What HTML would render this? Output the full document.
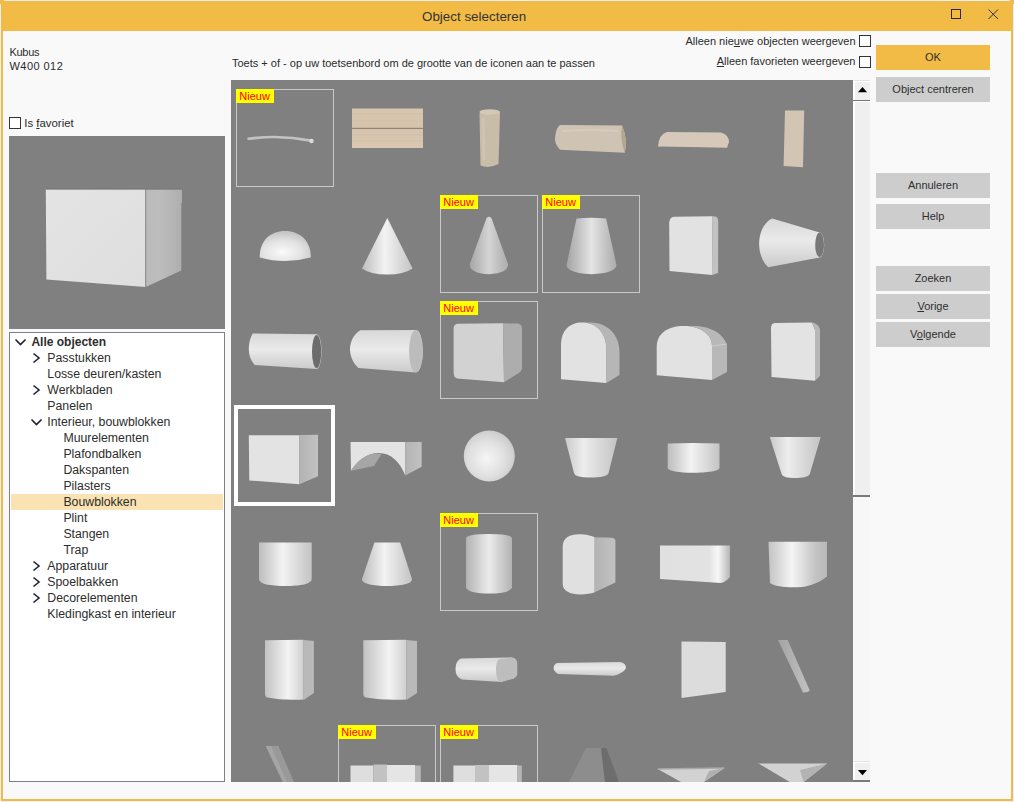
<!DOCTYPE html>
<html><head><meta charset="utf-8">
<style>
html,body{margin:0;padding:0}
body{width:1014px;height:802px;position:relative;overflow:hidden;background:#eef0f6;font-family:"Liberation Sans",sans-serif;color:#2b2b2b}
.a{position:absolute}
.t{position:absolute;line-height:1;white-space:nowrap}
#frame{left:1px;top:1px;width:1012px;height:800px;background:#f2bb46}
#content{left:3px;top:31px;width:1008px;height:768px;background:#f9f9f9}
.btn{position:absolute;left:876px;width:114px;height:25px;background:#cdcdcd}
.btn span{position:absolute;left:0;right:0;text-align:center;line-height:1;font-size:11px;color:#2f2f2f}
.cb{position:absolute;width:10px;height:10px;border:1px solid #333;background:#fff}
.tree{font-size:12px;color:#2d2d2d}
.u{text-decoration:underline}
#grid{left:231px;top:80px;width:622px;height:702px;background:#808080;overflow:hidden}
.cell{position:absolute;width:96px;height:96px;border:1px solid #c9c9c9}
.nw{position:absolute;left:-1px;top:-1px;width:38px;height:14px;background:#ffff00}
.nw span{position:absolute;left:3.3px;top:1.8px;font-size:11px;line-height:1;color:#ff0000}
#sb{left:853px;top:80px;width:17px;height:702px;background:#f7f7f7}
</style></head><body>
<div id="frame" class="a"></div>
<div class="a" style="left:0;top:0;width:4px;height:4px;background:#f2bb46"></div>
<div class="a" style="left:1010px;top:0;width:4px;height:4px;background:#f2bb46"></div>
<div id="content" class="a"></div>
<div class="t m" style="left:422px;top:10.3px;font-size:13.4px;color:#333">Object selecteren</div>
<!-- title icons -->
<svg class="a" style="left:0;top:0" width="1014" height="31">
  <rect x="951.5" y="9.5" width="9" height="9" fill="none" stroke="#2b2b35" stroke-width="1"/>
  <path d="M988.5,9.5 L998,19 M998,9.5 L988.5,19" stroke="#2b2b35" stroke-width="1"/>
</svg>

<div class="t m" style="left:9.5px;top:46.7px;font-size:11px;letter-spacing:-0.3px">Kubus</div>
<div class="t m" style="left:9.5px;top:61.2px;font-size:11px;letter-spacing:0.45px">W400 012</div>
<div class="t m" style="left:232px;top:58.1px;font-size:11px">Toets + of - op uw toetsenbord om de grootte van de iconen aan te passen</div>
<div class="t m" style="right:158.5px;top:36.1px;font-size:11px">Alleen nie<span class="u">u</span>we objecten weergeven</div>
<div class="cb" style="left:859px;top:35px"></div>
<div class="t m" style="right:158.5px;top:56.2px;font-size:11px"><span class="u">A</span>lleen favorieten weergeven</div>
<div class="cb" style="left:859px;top:56px"></div>

<div class="btn" style="top:45px;background:#f2bb46"><span class="m" style="top:51.7px;top:6.7px">OK</span></div>
<div class="btn" style="top:77px"><span style="top:6.7px">Object centreren</span></div>
<div class="btn" style="top:173px"><span style="top:6.7px">Annuleren</span></div>
<div class="btn" style="top:204px"><span style="top:6.7px">Help</span></div>
<div class="btn" style="top:266px"><span style="top:6.7px">Zoeken</span></div>
<div class="btn" style="top:294px"><span style="top:6.7px"><span class="u" style="position:static">V</span>orige</span></div>
<div class="btn" style="top:322px"><span style="top:6.7px">V<span class="u" style="position:static">o</span>lgende</span></div>

<div class="cb" style="left:9px;top:117px"></div>
<div class="t m" style="left:24.3px;top:117.8px;font-size:11.4px">Is <span class="u">f</span>avoriet</div>

<!-- preview -->
<div class="a" style="left:9px;top:136px;width:216px;height:193px;background:#808080"></div>
<svg class="a" style="left:0;top:0" width="230" height="330">
 <defs><linearGradient id="pvs" x1="0" x2="1"><stop offset="0" stop-color="#b3b3b3"/><stop offset="1" stop-color="#c2c2c2"/></linearGradient>
 <linearGradient id="pvf" x1="0" x2="1" y1="0" y2="1"><stop offset="0" stop-color="#e4e4e4"/><stop offset="1" stop-color="#dedede"/></linearGradient></defs>
 <path d="M45.8,189.2 L145.7,189.2 L145.7,287 L46.4,279.5 Z" fill="url(#pvf)"/>
 <linearGradient id="pvs2" x1="0" x2="1"><stop offset="0" stop-color="#bababa"/><stop offset="0.4" stop-color="#bdbdbd"/><stop offset="1" stop-color="#aeaeae"/></linearGradient><path d="M145.7,189.2 L182,189.2 L182,203 L181.3,203 L181.3,270.5 L145.7,287 Z" fill="url(#pvs2)"/><path d="M45.8,189.2 L182,189.2" stroke="#6e6e6e" stroke-width="0.7"/>
 <path d="M145.7,189.2 L145.7,287" stroke="#7a7a7a" stroke-width="0.8"/>
</svg>

<!-- tree -->
<div class="a" style="left:9px;top:332px;width:214px;height:448px;border:1px solid #7c7f88;background:#fff"></div>
<div class="a" style="left:11px;top:494px;width:212px;height:16px;background:#fae2b2"></div>
<div class="tree">
<div class="t m" style="left:31.4px;top:335.8px;font-weight:bold">Alle objecten</div>
<div class="t m" style="left:47.3px;top:351.55px;font-size:12.3px">Passtukken</div>
<div class="t m" style="left:47.3px;top:367.55px;font-size:12.3px">Losse deuren/kasten</div>
<div class="t m" style="left:47.3px;top:383.55px;font-size:12.3px">Werkbladen</div>
<div class="t m" style="left:47.3px;top:399.55px;font-size:12.3px">Panelen</div>
<div class="t m" style="left:47.3px;top:415.55px;font-size:12.3px">Interieur, bouwblokken</div>
<div class="t m" style="left:63.4px;top:431.55px;font-size:12.3px">Muurelementen</div>
<div class="t m" style="left:63.4px;top:447.55px;font-size:12.3px">Plafondbalken</div>
<div class="t m" style="left:63.4px;top:463.55px;font-size:12.3px">Dakspanten</div>
<div class="t m" style="left:63.4px;top:479.55px;font-size:12.3px">Pilasters</div>
<div class="t m" style="left:63.4px;top:495.55px;font-size:12.3px">Bouwblokken</div>
<div class="t m" style="left:63.4px;top:511.55px;font-size:12.3px">Plint</div>
<div class="t m" style="left:63.4px;top:527.55px;font-size:12.3px">Stangen</div>
<div class="t m" style="left:63.4px;top:543.55px;font-size:12.3px">Trap</div>
<div class="t m" style="left:47.3px;top:559.55px;font-size:12.3px">Apparatuur</div>
<div class="t m" style="left:47.3px;top:575.55px;font-size:12.3px">Spoelbakken</div>
<div class="t m" style="left:47.3px;top:591.55px;font-size:12.3px">Decorelementen</div>
<div class="t m" style="left:47.3px;top:607.55px;font-size:12.3px">Kledingkast en interieur</div>
</div>
<svg class="a" style="left:0;top:330px" width="60" height="300" fill="none" stroke="#1f2330" stroke-width="1.6">
  <path d="M15.5,9.5 L20.5,14.5 L25.5,9.5"/>
  <path d="M33.5,23.5 L39,28 L33.5,32.5"/>
  <path d="M33.5,55.5 L39,60 L33.5,64.5"/>
  <path d="M31.5,89.5 L36.5,94.5 L41.5,89.5"/>
  <path d="M33.5,231.5 L39,236 L33.5,240.5"/>
  <path d="M33.5,247.5 L39,252 L33.5,256.5"/>
  <path d="M33.5,263.5 L39,268 L33.5,272.5"/>
</svg>

<!-- grid -->
<div id="grid" class="a"><div class="a" style="left:-231px;top:-80px;width:1014px;height:802px">
<div class="cell" style="left:236px;top:89px"><div class="nw"><span>Nieuw</span></div></div>
<div class="cell" style="left:440px;top:195px"><div class="nw"><span>Nieuw</span></div></div>
<div class="cell" style="left:542px;top:195px"><div class="nw"><span>Nieuw</span></div></div>
<div class="cell" style="left:440px;top:301px"><div class="nw"><span>Nieuw</span></div></div>
<div class="cell" style="left:440px;top:513px"><div class="nw"><span>Nieuw</span></div></div>
<div class="cell" style="left:338px;top:725px"><div class="nw"><span>Nieuw</span></div></div>
<div class="cell" style="left:440px;top:725px"><div class="nw"><span>Nieuw</span></div></div>
<div class="a" style="left:234px;top:405px;width:93px;height:93px;border:4px solid #fff"></div>
<svg class="a" style="left:0;top:0" width="1014" height="802">
<defs>
 <linearGradient id="cylH" x1="0" x2="1" y1="0" y2="0">
  <stop offset="0" stop-color="#bdbdbd"/><stop offset="0.45" stop-color="#f3f3f3"/><stop offset="1" stop-color="#c4c4c4"/>
 </linearGradient>
 <linearGradient id="cylH2" x1="0" x2="1" y1="0" y2="0">
  <stop offset="0" stop-color="#b3b3b3"/><stop offset="0.5" stop-color="#ebebeb"/><stop offset="1" stop-color="#b3b3b3"/>
 </linearGradient>
 <linearGradient id="cylV" x1="0" x2="0" y1="0" y2="1">
  <stop offset="0" stop-color="#d8d8d8"/><stop offset="0.45" stop-color="#eaeaea"/><stop offset="1" stop-color="#cbcbcb"/>
 </linearGradient>
 <radialGradient id="sph" cx="0.45" cy="0.55" r="0.6">
  <stop offset="0" stop-color="#f6f6f6"/><stop offset="0.6" stop-color="#dfdfdf"/><stop offset="1" stop-color="#c8c8c8"/>
 </radialGradient>
 <radialGradient id="dome" cx="0.45" cy="0.7" r="0.65">
  <stop offset="0" stop-color="#fafafa"/><stop offset="0.6" stop-color="#e2e2e2"/><stop offset="1" stop-color="#c6c6c6"/>
 </radialGradient>
 <linearGradient id="wood" x1="0" x2="0" y1="0" y2="1">
  <stop offset="0" stop-color="#d9c6ae"/><stop offset="0.5" stop-color="#d6c3ab"/><stop offset="1" stop-color="#dac8b0"/>
 </linearGradient>
 <linearGradient id="rod" x1="0" x2="1" y1="0" y2="0">
  <stop offset="0" stop-color="#a3a3a3"/><stop offset="1" stop-color="#c2c2c2"/>
 </linearGradient>
</defs>
<!-- row1 -->
<path d="M248.5,138.8 Q280,134.5 311,140.6" fill="none" stroke="#c3c3c3" stroke-width="2.6" stroke-linecap="round"/>
<circle cx="311.5" cy="141" r="2.2" fill="#dadada"/>
<rect x="352" y="108.5" width="71" height="39.5" fill="url(#wood)"/>
<rect x="352" y="127.8" width="71" height="1.2" fill="#8f8476"/>
<path d="M352,114 H423 M352,121 H423 M352,135 H423 M352,141 H423" stroke="#cdb9a2" stroke-width="1.2" opacity="0.5"/>
<path d="M479.5,113 Q489.5,108.5 500,112 L498.5,164 Q489,169 480.5,165.5 Z" fill="#c8bda8"/><ellipse cx="489.7" cy="112" rx="10.3" ry="2.8" fill="#d3c9b7"/><path d="M483,118 L484,160" stroke="#d2c8b6" stroke-width="3" opacity="0.7"/>
<path d="M560,125 L622,125.5 Q628,139 624.8,152.7 L560,149.7 Q553.5,143 555.3,136 Q556,128 560,125 Z" fill="#cfc4b4"/><path d="M562,131 Q592,129 618,131" stroke="#d9d0c2" stroke-width="2" fill="none" opacity="0.7"/>
<path d="M622,125.5 Q628,139 624.8,152.7 Q619.5,139 622,125.5 Z" fill="#b3a692"/>
<path d="M658,146.5 Q659,134 667,132 L721,132.5 Q729,135 729,142 L727,147.7 L690,147 Z" fill="#d6c9ba"/>
<path d="M785,110.5 L804.2,110.5 L803,167.2 L783.6,166 Z" fill="#d3c5b4"/>
<!-- row2 -->
<path d="M259.7,257.5 C259.5,241 270,231.1 285,231.1 C300,231.1 311,241 310.8,257.5 Q298,261 285,261 Q272,261 259.7,257.5 Z" fill="url(#dome)"/>
<path d="M387.3,218 L412.6,268.5 Q404,274.5 387.3,274.5 Q370,274.5 362,268.5 Z" fill="url(#cylH)"/>
<linearGradient id="rc" x1="0" x2="1"><stop offset="0" stop-color="#a6a6a6"/><stop offset="0.5" stop-color="#d4d4d4"/><stop offset="1" stop-color="#acacac"/></linearGradient><path d="M485.5,221 Q486.5,216.8 489,216.8 Q491.5,216.8 492.5,221 L508,264 Q509,273 489,274.3 Q469,273 469.8,264 Z" fill="url(#rc)"/>
<linearGradient id="tc" x1="0" x2="1"><stop offset="0" stop-color="#a4a4a4"/><stop offset="0.5" stop-color="#e4e4e4"/><stop offset="1" stop-color="#ababab"/></linearGradient><path d="M576.5,218.5 Q591,217 606.1,218.5 L616.3,264 Q618,273 591.3,274.3 Q565,273 566.8,264 Z" fill="url(#tc)"/>
<path d="M674,216.8 L712.6,216.3 L712,274.9 L669.5,270.9 L669.2,223 Q669.5,217 674,216.8 Z" fill="#e2e2e2"/>
<path d="M712.6,216.3 L716.5,216.8 Q718.2,218 718.2,221 L718.1,272.9 L712,274.9 Z" fill="#c2c2c2"/>
<path d="M772.2,218.4 L819.6,232.4 A4.6,12.5 0 0 1 819.6,257.4 L768.4,267.3 C762,262 759,252 759.1,243 C759.5,232 764,222 772.2,218.4 Z" fill="url(#cylV)"/>
<ellipse cx="819.6" cy="244.9" rx="4.4" ry="12.3" fill="#787878"/>
<!-- row3 -->
<path d="M252.8,333.5 L316.9,334.3 A5,17.4 0 0 1 316.9,369 L254.7,365.1 C250.5,360 248.8,355 248.8,349.3 C248.8,343 250.5,337 252.8,333.5 Z" fill="url(#cylV)"/>
<ellipse cx="316.6" cy="351.6" rx="4.6" ry="16.6" fill="#6c6c6c"/>
<path d="M360.3,330.2 L415.9,330 A6.9,21.3 0 0 1 415.9,372.6 L358.3,368.1 C353,363 350,356 350,349.3 C350,341 354,334 360.3,330.2 Z" fill="url(#cylV)"/>
<ellipse cx="415.9" cy="351.3" rx="6.9" ry="21.3" fill="#bcbcbc"/>
<path d="M458,323.8 L503,323.3 L504,382.3 L457,378.5 Q453.6,377 453.6,372 L453.6,328 Q454,324 458,323.8 Z" fill="#d2d2d2"/>
<path d="M503,323.3 L518,323.6 Q522,324.5 522,329 L522,369 Q521,372 518,373.5 L504,382.3 Z" fill="#adadad"/>
<path d="M561,379.2 L561,345 C561,330 570,322.4 582,322.4 C596,322.4 606.4,332 606.4,350 L606.4,383 Z" fill="#e2e2e2"/>
<path d="M582,322.4 L590,322.4 C608,322.4 619.5,335 619.5,352 L619.5,375 L606.4,383 L606.4,350 C606.4,332 596,322.4 582,322.4 Z" fill="#b6b6b6"/>
<path d="M656.7,375.2 L656.7,347 C656.7,334 667,326 684,326 C700,326 712,334 712,346 L712,380 Z" fill="#e2e2e2"/>
<path d="M684,326 L694,326 C712,326 724,335 727,345 L727,372 L712,380 L712,346 C712,334 700,326 684,326 Z" fill="#b8b8b8"/>
<path d="M712,346 L727,344" stroke="#d0d0d0" stroke-width="0.8"/>
<path d="M775,323 L812,322.4 L815,330 L815,380.8 L771.5,377 L771,328 Q771,323.2 775,323 Z" fill="#e3e3e3"/>
<path d="M812,322.4 Q818,323 820,329 L820,376 L815,380.8 L815,330 Z" fill="#b7b7b7"/>
<!-- row4 -->
<path d="M248.8,435.2 L299.3,435.2 L299.3,484.3 L249.3,480.5 Z" fill="#e3e3e3"/>
<path d="M299.3,435 L318,434.8 L318,476.3 L299.3,484.3 Z" fill="url(#pvs)"/>
<path d="M350.5,442 L405.3,442 L405.3,475.5 C400,462 391,453 379,453 C367,453 357,461 351,470.8 Z" fill="#e3e3e3"/>
<path d="M351,470.8 C356,462 365,455 373,453.4 L381.5,454 L374,466 Z" fill="#a6a6a6"/>
<path d="M405.3,442 L421.6,442 L421.6,466.8 L405.3,475.5 Z" fill="url(#pvs)"/>
<circle cx="489.3" cy="456" r="25.5" fill="url(#sph)"/>
<linearGradient id="cylH3" x1="0" x2="1"><stop offset="0" stop-color="#cacaca"/><stop offset="0.35" stop-color="#ededed"/><stop offset="1" stop-color="#c4c4c4"/></linearGradient><path d="M565,437.9 L617.3,437.9 L608.6,473 C607,476.5 600,477.5 590.8,477.5 C581,477.5 575,476.5 574,473 Z" fill="url(#cylH3)"/>
<path d="M667.7,443.5 Q693.5,442.5 719.5,443.5 L719.5,468 C719.5,471 707,472.8 693,472.8 C679,472.8 667.7,471 667.7,468 Z" fill="url(#cylH)"/>
<path d="M769.8,437 L820.7,437 L809.8,474 C808.5,477 802,478 795,478 C788,478 782.5,477 781.6,474 Z" fill="url(#cylH3)"/>
<!-- row5 -->
<path d="M259,542.5 L311.7,542.5 L311.7,579 C311.7,584 300,586 285.3,586 C270,586 259,584 259,579 Z" fill="url(#cylH)"/>
<path d="M374.4,542.6 L400.2,542.6 L411.8,578.5 C413.5,584 400,586 387,586 C374,586 360.5,584 362.2,578.5 Z" fill="url(#cylH)"/>
<path d="M466,538 Q468,534 489,534 Q510,534 512,538 L512,588 Q508,593.6 489,593.6 Q470,593.6 466,588 Z" fill="url(#cylH2)"/>
<path d="M562.7,546 C562.7,538 570,534.3 579,534.3 C586,534.3 592,536 594.7,537.3 L594.7,592.3 C591,593.8 586,594.4 580.5,594.4 C570,594.4 562.7,591 562.7,584 Z" fill="#e0e0e0"/>
<path d="M594.7,537.3 L612,537.8 Q615.4,538.5 615.4,541 L615.4,582.5 L594.7,592.3 Z" fill="url(#pvs)"/>
<linearGradient id="rr" x1="0" x2="1"><stop offset="0" stop-color="#e0e0e0"/><stop offset="0.7" stop-color="#e3e3e3"/><stop offset="0.83" stop-color="#f7f7f7"/><stop offset="1" stop-color="#b5b5b5"/></linearGradient>
<path d="M660,545.4 L730,545.4 L730,577 Q726,582 721,583 L660,579 Z" fill="url(#rr)"/>
<linearGradient id="hc" x1="0" x2="1"><stop offset="0" stop-color="#c3c3c3"/><stop offset="0.4" stop-color="#f5f5f5"/><stop offset="0.8" stop-color="#c4c4c4"/><stop offset="1" stop-color="#b8b8b8"/></linearGradient>
<path d="M768.5,541.7 L827,541.7 L827,576.6 C820,582 812,586 802,587 C790,588 775,587 770,583 Z" fill="url(#hc)"/>
<!-- row6 -->
<linearGradient id="c6" x1="0" x2="1"><stop offset="0" stop-color="#c2c2c2"/><stop offset="0.6" stop-color="#f4f4f4"/><stop offset="1" stop-color="#cfcfcf"/></linearGradient>
<path d="M265,640.2 L303.6,639.8 L303.6,699.6 C292,700.2 275,699.5 266.5,697.3 Q265,696.5 265,694 Z" fill="url(#c6)"/>
<path d="M303.6,640 L313.9,641 L313.9,693 L303.6,700 Z" fill="#b9b9b9"/>
<path d="M363.3,640.2 L406.4,639.8 L406.4,699.6 C394,700.2 375,699.5 365,697.3 Q363.3,696.5 363.3,694 Z" fill="url(#c6)"/>
<path d="M406.4,640 L417,641 L417,693 L406.4,700 Z" fill="#b9b9b9"/>
<path d="M461,658.5 L512,657.5 L502,682 L462,679.5 Q455.5,677 455.5,669 Q455.5,660.5 461,658.5 Z" fill="url(#cylV)"/>
<path d="M499.5,659 L512,657.5 Q517.3,658 517.3,664 L517.3,674 Q517,677.5 512,679 L502,682 Q496,682 496,670 Q496,660 499.5,659 Z" fill="#bdbdbd"/>
<path d="M557,663 L620,662 Q626,663 626,668 Q624,673 614,675.7 L558,674 Q553.6,671 553.6,668 Q554,664 557,663 Z" fill="url(#cylV)"/>
<path d="M681.5,641.5 L725.7,642 L725.7,692 L681.5,698 Z" fill="#dcdcdc"/>
<path d="M778,640 L787.6,640 L809.7,690.5 Q808,693 803,692.5 Z" fill="url(#rod)"/>
<!-- row7 -->
<path d="M265.7,746 L278.1,746 L293.7,782 L282.8,782 Z" fill="#a5a5a5"/>
<path d="M271,746 L278.1,746 L293.7,782 L287,782 Z" fill="#999999"/>
<rect x="350.5" y="765.5" width="23" height="17" fill="#dedede"/><rect x="373.5" y="764.5" width="13.5" height="18" fill="#c2c2c2"/>
<rect x="387" y="765" width="28" height="17" fill="#e5e5e5"/><rect x="415" y="765.5" width="5.8" height="17" fill="#b6b6b6"/>
<rect x="453.4" y="765.5" width="21.6" height="17" fill="#dedede"/><rect x="475" y="765" width="14" height="17.5" fill="#c2c2c2"/>
<rect x="489" y="765" width="28.5" height="17" fill="#e5e5e5"/><rect x="517.5" y="765.5" width="4.3" height="17" fill="#b6b6b6"/>
<path d="M569,782 L586,748 L601,748 L605,782 Z" fill="#8d8d8d"/>
<path d="M601,748 L606.4,748 L619,782 L605,782 Z" fill="#6d6d6d"/>
<path d="M657.7,769 L724.4,768 L704,782 L681,782 Z" fill="#d2d2d2"/>
<path d="M709,771 L724.4,768 L704,782 Z" fill="#b0b0b0"/>
<path d="M657.7,769 L724.4,768" stroke="#a9a9a9" stroke-width="1.5"/>
<path d="M758.6,763.5 L827,763.5 L803.7,782 L789.7,782 Z" fill="#d2d2d2"/>
<path d="M800,770 L827,763.5 L803.7,782 Z" fill="#b3b3b3"/>
<path d="M758.6,763.5 L827,763.5" stroke="#a9a9a9" stroke-width="1.2"/>
</svg>
</div></div>
<!-- scrollbar -->
<div id="sb" class="a">
 <div class="a" style="left:1px;top:0;width:16px;height:1px;background:#e3e3e3"></div>
 <div class="a" style="left:0;top:1px;width:17px;height:19px;background:#fff"></div>
 <div class="a" style="left:2px;top:2px;width:15px;height:18px;background:#f0f0f0"></div>
 <svg class="a" style="left:0;top:0" width="17" height="20"><path d="M4.9,12.2 L9.5,7 L14.1,12.2 Z" fill="#000"/></svg>
 <div class="a" style="left:0;top:19.5px;width:17px;height:1.5px;background:#737373"></div>
 <div class="a" style="left:0;top:21px;width:17px;height:395px;background:#fff"></div>
 <div class="a" style="left:2px;top:22px;width:15px;height:393px;background:#efefef"></div>
 <div class="a" style="left:0;top:415px;width:17px;height:1.5px;background:#7a7a7a"></div>
 <div class="a" style="left:1px;top:681px;width:16px;height:1px;background:#e3e3e3"></div>
 <div class="a" style="left:0;top:682px;width:17px;height:18px;background:#fff"></div>
 <div class="a" style="left:2px;top:683px;width:15px;height:17px;background:#f0f0f0"></div>
 <svg class="a" style="left:0;top:682px" width="17" height="18"><path d="M4.9,8 L14,8 L9.5,13.2 Z" fill="#000"/></svg>
 <div class="a" style="left:0;top:700px;width:17px;height:2px;background:#7a7a7a"></div>
</div>
</body></html>
